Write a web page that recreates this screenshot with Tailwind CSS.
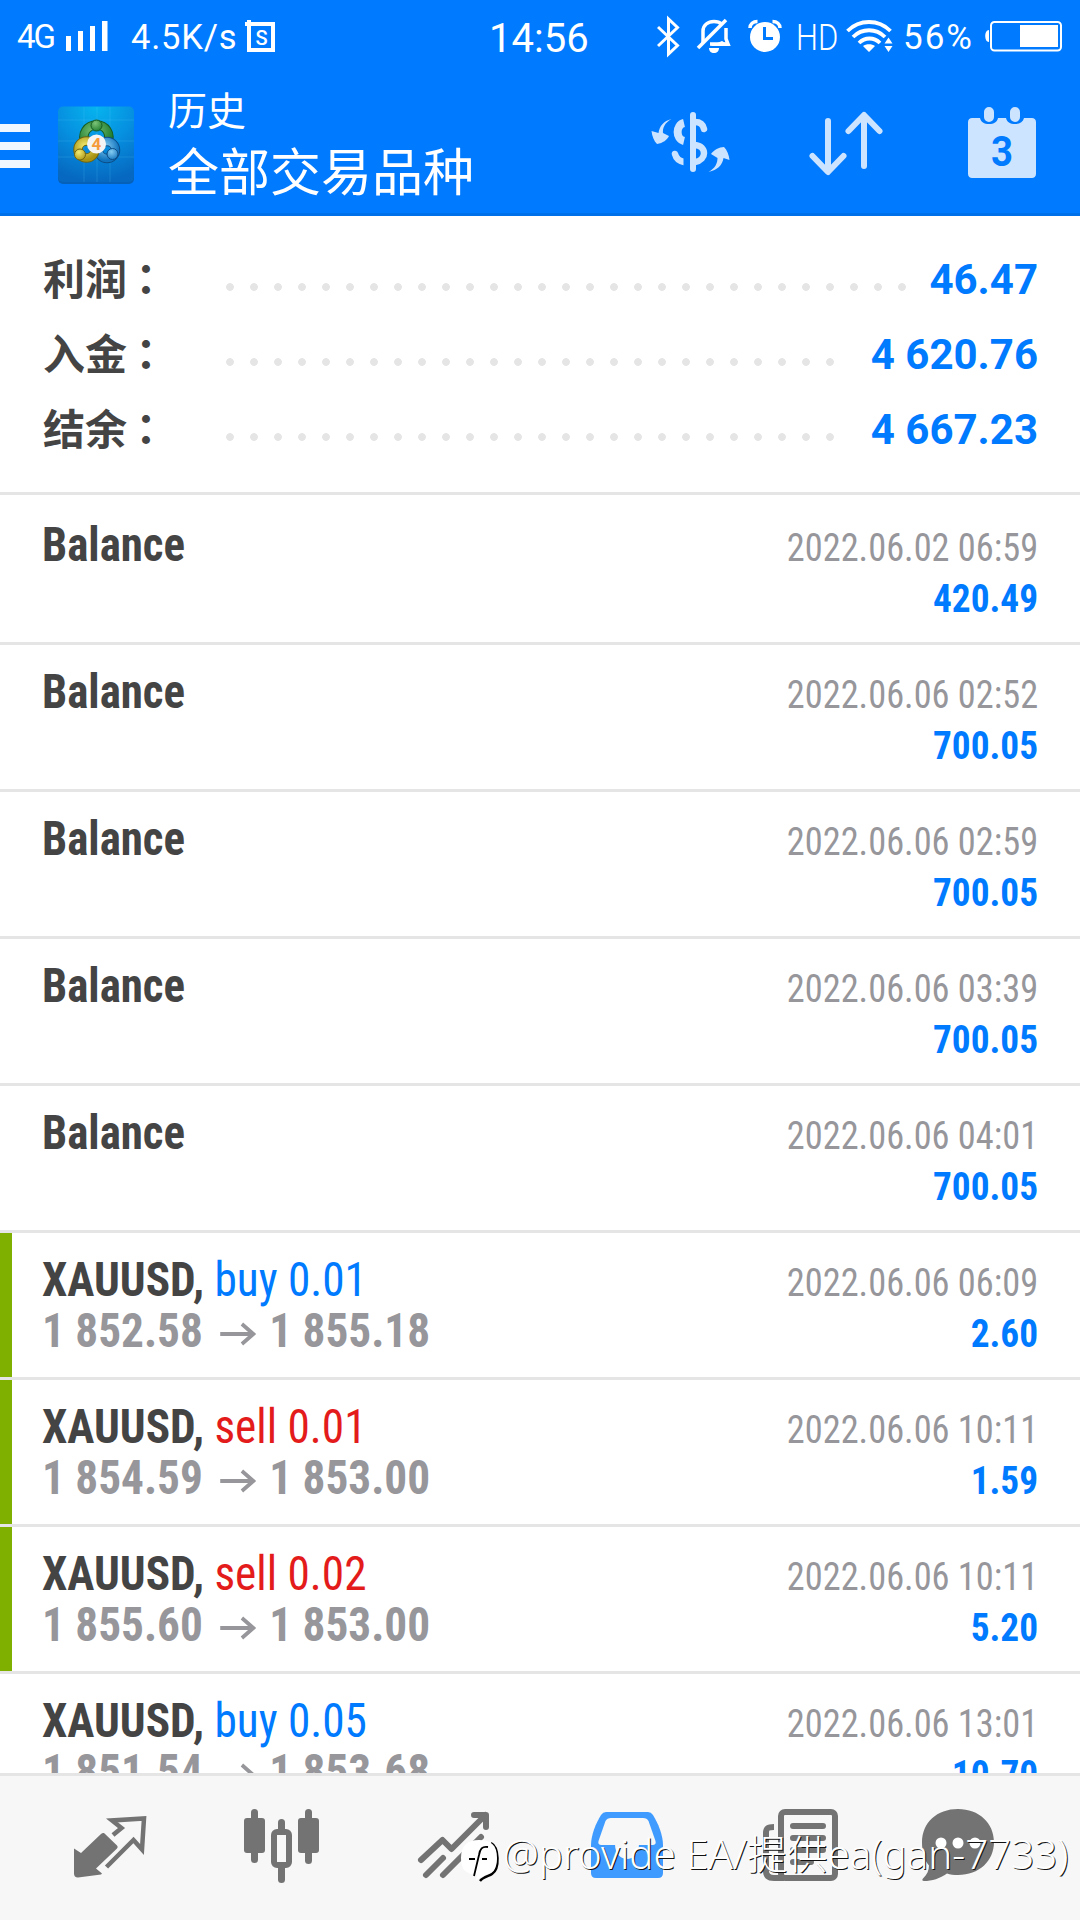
<!DOCTYPE html>
<html lang="zh-CN">
<head>
<meta charset="utf-8">
<title>历史</title>
<script src="https://cdn.jsdelivr.net/npm/@tailwindcss/browser@4"></script>
</head>
<body class="bg-white">
<div class="relative flex h-[1920px] w-[1080px] flex-col overflow-hidden bg-white font-[Roboto,'Noto_Sans_CJK_SC',sans-serif] text-[#444]">

  <header class="flex h-[216px] shrink-0 flex-col border-b-3 border-[#0070ea] bg-[#007aff] text-white">
    <!-- status bar -->
    <div class="flex h-[72px] shrink-0 items-center whitespace-nowrap leading-[69px]">
      <span class="ml-[17px] w-[49px] text-[33px] tracking-[-2px]">4G</span>
      <svg class="h-[72px] w-[65px]" viewBox="66 0 65 72" fill="#fff"><path d="M66 36h5v15h-5zM78 31h5v20h-5zM90 26h5v25h-5zM102 21h5.500v30H102z"/></svg>
      <span class="w-[114px] pt-[3px] text-[34.500px] tracking-[0.8px]">4.5K/s</span>
      <svg class="h-[72px] w-[32px]" viewBox="245 0 32 72" fill="none" stroke="#fff" stroke-width="4"><path d="M249 24h24v26h-24zM245 24h4v-4"/><text x="261.500" y="44.500" text-anchor="middle" font-family="Roboto" font-size="20" font-weight="500" fill="#fff" stroke="none">S</text></svg>
      <span class="ml-[212px] w-[168px] pt-[4px] text-[40px]">14:56</span>
      <svg class="h-[72px] w-[139px]" viewBox="657 0 139 72" fill="none" stroke="#fff">
        <path d="M658 27l19.500 18.500-9 8.500V19l9 8.500L658 46" stroke-width="3"/>
        <path d="M703 43V31c0-6 5-9.500 11-9.500 3 0 6 1 7.500 2.500M726 28v11l2 5h-18" stroke-width="3.500"/>
        <path d="M698 48l28-28" stroke-width="3.500"/>
        <path d="M722 41l9 5h-21zM709 48h10c0 3-2 5-5 5s-5-2-5-5z" fill="#fff" stroke="none"/>
        <circle cx="765" cy="37" r="15" fill="#fff" stroke="none"/>
        <path d="M750 28c0-4 3-6.500 7.500-6.500M780 28c0-4-3-6.500-7.500-6.500" stroke-width="3.500"/>
        <path d="M764.500 27v11.500h8.500" stroke="#007aff" stroke-width="3"/>
      </svg>
      <span class="w-[50px] origin-left scale-x-[.85] pt-[3px] text-[36.500px] font-[350]">HD</span>
      <svg class="h-[72px] w-[57px]" viewBox="846 0 57 72" fill="none" stroke="#fff" stroke-width="3.800">
        <path d="M847.500 31c12-12 31-12 43 0M853 37c9-9 23-9 32 0M859 43c6-6 15-6 21 0"/>
        <path d="M863 46c3-2.500 9-2.500 12 0l-6 6zM888.500 37.500l4 6h-8zM888.500 52l4-6h-8z" fill="#fff" stroke="none"/>
      </svg>
      <span class="w-[82px] pt-[3px] text-[35px] tracking-[2px]">56%</span>
      <svg class="h-[72px] w-[78px]" viewBox="985 0 78 72" fill="none">
        <rect x="991" y="22" width="70" height="28.500" rx="3.500" stroke="#fff" stroke-width="2"/>
        <path d="M1020 25h38v22h-38zM989 30v12c-5 0-5-12 0-12z" fill="#fff"/>
      </svg>
    </div>
    <!-- title bar -->
    <div class="flex h-[141px] items-start">
      <svg class="h-[141px] w-[168px]" viewBox="0 72 168 141">
        <defs>
          <radialGradient id="tile" cx=".5" cy="0" r="1"><stop offset="0" stop-color="#06b4ee"/><stop offset=".5" stop-color="#0690e0"/><stop offset="1" stop-color="#0668c0"/></radialGradient>
          <radialGradient id="gr" cx=".4" cy=".3" r=".8"><stop offset="0" stop-color="#7cc478"/><stop offset="1" stop-color="#1c7a2c"/></radialGradient>
          <radialGradient id="ye" cx=".4" cy=".3" r=".8"><stop offset="0" stop-color="#f3ec70"/><stop offset="1" stop-color="#a89212"/></radialGradient>
          <radialGradient id="bl" cx=".4" cy=".3" r=".8"><stop offset="0" stop-color="#84ccf2"/><stop offset="1" stop-color="#1173bd"/></radialGradient>
        </defs>
        <path d="M0 124h30v8H0zM0 142h30v8H0zM0 160h30v8H0z" fill="#f0f7ff"/>
        <rect x="58" y="108" width="76" height="76" rx="5" fill="#0560b8"/>
        <rect x="58" y="106.500" width="76" height="75.500" rx="5" fill="url(#tile)"/>
        <path d="M84 107v75M97 107v75M110 107v75M58 120h76M58 141h76M58 157h76" stroke="#6cd0ff" stroke-opacity=".18" stroke-width="1"/>
        <path d="M86 145c-6-12 2-20 10.500-20s16 8 10.500 20" fill="none" stroke="#165c22" stroke-width="9.500"/>
        <path d="M86 145c-6-12 2-20 10.500-20s16 8 10.500 20" fill="none" stroke="url(#gr)" stroke-width="7.500"/>
        <circle cx="107" cy="150" r="8.500" fill="none" stroke="#0c4c86" stroke-width="9.500"/>
        <circle cx="107" cy="150" r="8.500" fill="none" stroke="url(#bl)" stroke-width="7.500"/>
        <circle cx="86.500" cy="149.500" r="8.500" fill="none" stroke="#6e6412" stroke-width="9.500"/>
        <circle cx="86.500" cy="149.500" r="8.500" fill="none" stroke="url(#ye)" stroke-width="7.500"/>
        <circle cx="96.500" cy="125.500" r="5.500" fill="url(#gr)" stroke="#165c22"/>
        <circle cx="80" cy="154.500" r="5.500" fill="url(#ye)" stroke="#6e6412"/>
        <circle cx="112.500" cy="154" r="5.500" fill="url(#bl)" stroke="#0c4c86"/>
        <circle cx="96.500" cy="144" r="9.500" fill="#f4f4f4"/>
        <text x="96.500" y="150" text-anchor="middle" font-family="Roboto" font-weight="700" font-size="17" fill="#f59b3c">4</text>
      </svg>
      <div class="flex w-[483px] flex-col whitespace-nowrap pt-[12px]">
        <span class="text-[39px] leading-[57px]">历史</span>
        <span class="text-[51px] leading-[66px]">全部交易品种</span>
      </div>
      <svg class="h-[141px] w-[429px]" viewBox="651 72 429 141" fill="none" stroke="#cce4ff" stroke-linecap="round" stroke-linejoin="round">
        <path d="M684 123c-8.500 2-8.500 16 0 18" stroke-width="8" stroke-linecap="butt"/>
        <path d="M675 154c1 4 4 7 9 8" stroke-width="6.500"/>
        <path d="M695 122c5 0 8 2 9 7M695 145c12 1 12 15 0 17" stroke-width="6.500"/>
        <path d="M683.500 150h6.500v22h-6.500z" fill="#007aff" stroke="none"/>
        <path d="M693 115v54" stroke-width="6"/>
        <path d="M671.500 119c-7 4-9 9-8.500 14l6 3c-2 4-6 7-12 8-3-3-5-8-5.500-13l7 2c1-7 5-12 13-14z" fill="#cce4ff" stroke="none"/>
        <path d="M708.500 172c7-4 9-9 9-14l-6.500-4c3-4 8-7 13-7 3 3 5 8 5.500 13l-6-2c-1 7-6 12-15 14z" fill="#cce4ff" stroke="none"/>
        <path d="M828 121v50M812.500 156l15.500 16 15.500-16M864 166v-50M848.500 131l15.500-16 15.500 16" stroke-width="6"/>
        <path d="M972 118h8c1 4 4 6 9 6s8-2 9-6h8c1 4 4 6 9 6s8-2 9-6h8c2 0 4 1.500 4 4v52c0 2.500-2 4-4 4h-60c-2 0-4-1.500-4-4v-52c0-2.500 2-4 4-4z" fill="#cce4ff" stroke="none"/>
        <path d="M989 112v5M1015 112v5" stroke-width="10"/>
        <text x="1002" y="166" text-anchor="middle" font-family="Roboto" font-weight="700" font-size="43" textLength="22" lengthAdjust="spacingAndGlyphs" fill="#007aff" stroke="none">3</text>
      </svg>
    </div>
  </header>

  <!-- totals -->
  <section class="flex h-[279px] shrink-0 flex-col border-b-3 border-[#e5e5e5] pl-[43px] pr-[42px] pt-[26px] text-[42px] font-bold leading-[75px]">
    <div class="flex h-[75px]"><span class="-mt-[3px] w-[175px]">利润<span class="-ml-[2px] font-['Noto_Sans_CJK_TC',sans-serif]" lang="zh-TW">：</span></span><span class="mt-[40.500px] h-[8px] w-[696px] bg-[radial-gradient(circle,#e5e5e5_3.5px,transparent_4.2px)] bg-[length:24px_8px]"></span><span class="ml-auto text-[#007aff]">46.47</span></div>
    <div class="flex h-[75px]"><span class="-mt-[3px] w-[175px]">入金<span class="-ml-[2px] font-['Noto_Sans_CJK_TC',sans-serif]" lang="zh-TW">：</span></span><span class="mt-[40.500px] h-[8px] w-[624px] bg-[radial-gradient(circle,#e5e5e5_3.5px,transparent_4.2px)] bg-[length:24px_8px]"></span><span class="ml-auto text-[#007aff]">4 620.76</span></div>
    <div class="flex h-[75px]"><span class="-mt-[3px] w-[175px]">结余<span class="-ml-[2px] font-['Noto_Sans_CJK_TC',sans-serif]" lang="zh-TW">：</span></span><span class="mt-[40.500px] h-[8px] w-[624px] bg-[radial-gradient(circle,#e5e5e5_3.5px,transparent_4.2px)] bg-[length:24px_8px]"></span><span class="ml-auto text-[#007aff]">4 667.23</span></div>
  </section>

  <!-- history list -->
  <main class="flex h-[1278px] shrink-0 flex-col overflow-hidden whitespace-nowrap pt-[3px] font-['Roboto_Condensed',Roboto,sans-serif] leading-[51px] [font-stretch:75%]">
    <div class="flex h-[147px] shrink-0 justify-between border-b-3 border-[#e5e5e5] pl-[42px] pr-[42px]"><div class="origin-left scale-x-[.935] pt-[21px] text-[48px] font-bold">Balance</div><div class="pt-[24px] text-right text-[39.500px]"><div class="origin-right scale-x-[.92] text-[#96969b]">2022.06.02 06:59</div><div class="origin-right scale-x-[.945] font-bold text-[#007aff]">420.49</div></div></div>
    <div class="flex h-[147px] shrink-0 justify-between border-b-3 border-[#e5e5e5] pl-[42px] pr-[42px]"><div class="origin-left scale-x-[.935] pt-[21px] text-[48px] font-bold">Balance</div><div class="pt-[24px] text-right text-[39.500px]"><div class="origin-right scale-x-[.92] text-[#96969b]">2022.06.06 02:52</div><div class="origin-right scale-x-[.945] font-bold text-[#007aff]">700.05</div></div></div>
    <div class="flex h-[147px] shrink-0 justify-between border-b-3 border-[#e5e5e5] pl-[42px] pr-[42px]"><div class="origin-left scale-x-[.935] pt-[21px] text-[48px] font-bold">Balance</div><div class="pt-[24px] text-right text-[39.500px]"><div class="origin-right scale-x-[.92] text-[#96969b]">2022.06.06 02:59</div><div class="origin-right scale-x-[.945] font-bold text-[#007aff]">700.05</div></div></div>
    <div class="flex h-[147px] shrink-0 justify-between border-b-3 border-[#e5e5e5] pl-[42px] pr-[42px]"><div class="origin-left scale-x-[.935] pt-[21px] text-[48px] font-bold">Balance</div><div class="pt-[24px] text-right text-[39.500px]"><div class="origin-right scale-x-[.92] text-[#96969b]">2022.06.06 03:39</div><div class="origin-right scale-x-[.945] font-bold text-[#007aff]">700.05</div></div></div>
    <div class="flex h-[147px] shrink-0 justify-between border-b-3 border-[#e5e5e5] pl-[42px] pr-[42px]"><div class="origin-left scale-x-[.935] pt-[21px] text-[48px] font-bold">Balance</div><div class="pt-[24px] text-right text-[39.500px]"><div class="origin-right scale-x-[.92] text-[#96969b]">2022.06.06 04:01</div><div class="origin-right scale-x-[.945] font-bold text-[#007aff]">700.05</div></div></div>

    <div class="flex h-[147px] shrink-0 border-b-3 border-[#e5e5e5] pr-[42px]"><div class="mr-[30px] w-[12px] bg-[#7fb000]"></div><div class="origin-left scale-x-[.943] pt-[21px] text-[48px] font-bold"><div>XAUUSD, <span class="font-normal text-[#007aff]">buy 0.01</span></div><div class="flex text-[#96969b]"><span class="w-[188px]">1 852.58</span><svg class="h-[51px] w-[53px]" viewBox="0 0 53 51" fill="none" stroke="#96969b" stroke-width="4"><path d="M1 29h34M24 19l12 10-12 10"/></svg><span>1 855.18</span></div></div><div class="ml-auto pt-[24px] text-right text-[39.500px]"><div class="origin-right scale-x-[.92] text-[#96969b]">2022.06.06 06:09</div><div class="origin-right scale-x-[.945] font-bold text-[#007aff]">2.60</div></div></div>
    <div class="flex h-[147px] shrink-0 border-b-3 border-[#e5e5e5] pr-[42px]"><div class="mr-[30px] w-[12px] bg-[#7fb000]"></div><div class="origin-left scale-x-[.943] pt-[21px] text-[48px] font-bold"><div>XAUUSD, <span class="font-normal text-[#e31b1b]">sell 0.01</span></div><div class="flex text-[#96969b]"><span class="w-[188px]">1 854.59</span><svg class="h-[51px] w-[53px]" viewBox="0 0 53 51" fill="none" stroke="#96969b" stroke-width="4"><path d="M1 29h34M24 19l12 10-12 10"/></svg><span>1 853.00</span></div></div><div class="ml-auto pt-[24px] text-right text-[39.500px]"><div class="origin-right scale-x-[.92] text-[#96969b]">2022.06.06 10:11</div><div class="origin-right scale-x-[.945] font-bold text-[#007aff]">1.59</div></div></div>
    <div class="flex h-[147px] shrink-0 border-b-3 border-[#e5e5e5] pr-[42px]"><div class="mr-[30px] w-[12px] bg-[#7fb000]"></div><div class="origin-left scale-x-[.943] pt-[21px] text-[48px] font-bold"><div>XAUUSD, <span class="font-normal text-[#e31b1b]">sell 0.02</span></div><div class="flex text-[#96969b]"><span class="w-[188px]">1 855.60</span><svg class="h-[51px] w-[53px]" viewBox="0 0 53 51" fill="none" stroke="#96969b" stroke-width="4"><path d="M1 29h34M24 19l12 10-12 10"/></svg><span>1 853.00</span></div></div><div class="ml-auto pt-[24px] text-right text-[39.500px]"><div class="origin-right scale-x-[.92] text-[#96969b]">2022.06.06 10:11</div><div class="origin-right scale-x-[.945] font-bold text-[#007aff]">5.20</div></div></div>
    <div class="flex h-[147px] shrink-0 pl-[42px] pr-[42px]"><div class="origin-left scale-x-[.943] pt-[21px] text-[48px] font-bold"><div>XAUUSD, <span class="font-normal text-[#007aff]">buy 0.05</span></div><div class="flex text-[#96969b]"><span class="w-[188px]">1 851.54</span><svg class="h-[51px] w-[53px]" viewBox="0 0 53 51" fill="none" stroke="#96969b" stroke-width="4"><path d="M1 29h34M24 19l12 10-12 10"/></svg><span>1 853.68</span></div></div><div class="ml-auto pt-[24px] text-right text-[39.500px]"><div class="origin-right scale-x-[.92] text-[#96969b]">2022.06.06 13:01</div><div class="origin-right scale-x-[.945] font-bold text-[#007aff]">10.70</div></div></div>
  </main>

  <!-- tab bar -->
  <nav class="flex h-[147px] shrink-0 border-t-3 border-[#e5e5e5] bg-[#f7f7f7] pl-[24px]">
    <svg class="h-[144px] w-[172px]" viewBox="24 1776 172 144" fill="none" stroke="#737373">
      <path d="M113 1835l8.500-7-9.500-7.500 32-2-2 31-8.500-9.500-27 27" stroke-width="4.500"/>
      <path d="M104 1833q-1.500-.5-3 1l-20 19-7-4.500v25q0 4 4 4l23-3 1-1-6-5 21-20q1.500-1.500 0-3z" fill="#737373" stroke="none"/>
    </svg>
    <svg class="h-[144px] w-[172px]" viewBox="196 1776 172 144" fill="#737373">
      <rect x="251" y="1809" width="7" height="54" rx="3.500"/><rect x="244" y="1818" width="21" height="35" rx="3"/>
      <rect x="305" y="1809" width="7" height="55" rx="3.500"/><rect x="298" y="1818" width="21" height="35" rx="3"/>
      <rect x="278" y="1819" width="7" height="64" rx="3.500"/><rect x="274" y="1832" width="15" height="33" rx="3" fill="#f7f7f7" stroke="#737373" stroke-width="6"/>
    </svg>
    <svg class="h-[144px] w-[172px]" viewBox="368 1776 172 144" fill="none" stroke="#737373" stroke-width="6" stroke-linecap="round" stroke-linejoin="round">
      <path d="M421 1860l21.500-20 9 9 34-34M474 1815h12v12M426 1875l17-17M443 1875l38-38" />
    </svg>
    <svg class="h-[144px] w-[172px]" viewBox="540 1776 172 144">
      <path d="M606 1812h42q3 0 5 3c5 8 10 20 10 30v28q0 5-5 5h-62q-5 0-5-5v-28c0-10 5-22 10-30q2-3 5-3z" fill="#3f9bff"/>
      <path d="M611 1818h32q4 0 5.500 3l7 20q1 4-3 4h-51q-4 0-3-4l7-20q1.500-3 5.500-3z" fill="#f7f7f7"/>
      <path d="M615 1844c0 20 24 20 24 0z" fill="#f7f7f7"/>
    </svg>
    <svg class="h-[144px] w-[172px]" viewBox="712 1776 172 144" fill="none" stroke="#737373" stroke-width="6">
      <rect x="781" y="1812" width="54" height="66" rx="4"/>
      <path d="M774 1827c-6 0-8 1-8 6v38c0 5 3 7 8 7h10"/>
      <path d="M793 1826h30M793 1838h30M793 1850h30M793 1862h18" stroke-linecap="round"/>
    </svg>
    <svg class="h-[144px] w-[172px]" viewBox="884 1776 172 144">
      <path d="M958 1809c21 0 36 14 36 33s-15 33-36 33c-4 0-8-.5-11-1.500-7 5-15 7.500-23 7.500-2 0-2-1.500-1-2.500 4-4 6-8 6-13-5-6-7-14-7-23 0-20 15-33.500 36-33.500z" fill="#737373"/>
      <circle cx="941" cy="1843" r="5.500" fill="#fff"/><circle cx="958" cy="1843" r="5.500" fill="#fff"/><circle cx="975" cy="1843" r="5.500" fill="#fff"/>
    </svg>
  </nav>

  <!-- author mark -->
  <div class="absolute left-[460px] top-[1832px] flex h-[56px] whitespace-nowrap">
    <svg class="h-[56px] w-[43px]" viewBox="460 1832 43 56">
      <path d="M491 1843c8 4 9 26 1 31-3 2-9 3-12 7" fill="none" stroke="#000" stroke-width="2.500"/>
      <path d="M479 1840c12 0 18 5 18 18s-6 15-12 17c-3 1-6 3-9 6l1-6c-11-1-16-5-16-17s6-18 18-18z" fill="#fff"/>
      <path d="M488 1847c-6-1-8 2-9 8l-5 21M469 1859h6M482 1859h5" fill="none" stroke="#000" stroke-width="1.800"/>
    </svg>
    <span class="font-['Noto_Sans','Noto_Sans_CJK_SC',sans-serif] text-[40.300px] font-light leading-[44px] text-white [text-shadow:1px_1px_0_#111]">@provide EA/提供ea(gan-7733)</span>
  </div>
</div>
</body>
</html>
